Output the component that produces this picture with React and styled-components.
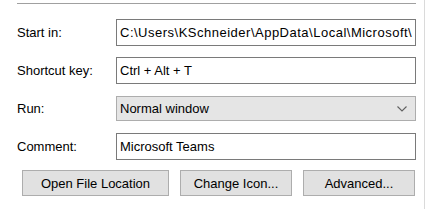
import React from 'react';
import styled, { createGlobalStyle } from 'styled-components';

const GlobalStyle = createGlobalStyle`
  html, body {
    margin: 0;
    padding: 0;
    background: #ffffff;
  }
  body {
    font-family: 'Liberation Sans', Arial, sans-serif;
    font-size: 13px;
    color: #000000;
  }
`;

const fields = [
  { label: 'Start in:', value: 'C:\\Users\\KSchneider\\AppData\\Local\\Microsoft\\', spacing: 0.5 },
  { label: 'Shortcut key:', value: 'Ctrl + Alt + T' },
  { label: 'Run:', value: 'Normal window', select: true },
  { label: 'Comment:', value: 'Microsoft Teams' }
];

const buttons = [
  { text: 'Open File Location', width: 147 },
  { text: 'Change Icon...', width: 112 },
  { text: 'Advanced...', width: 112 }
];

function Chevron() {
  return (
    <svg width="10" height="6" viewBox="0 0 10 6">
      <path d="M0.5 0.5 L5 5 L9.5 0.5" fill="none" stroke="#606060" strokeWidth="1.1" />
    </svg>
  );
}

export default function App() {
  return (
    <>
      <GlobalStyle />
      <Page>
        <Panel>
          <Separator />
          <Form>
            {fields.map((f) => (
              <Row key={f.label}>
                <Label>{f.label}</Label>
                {f.select ? (
                  <Select>
                    <span>{f.value}</span>
                    <Chevron />
                  </Select>
                ) : (
                  <Field $spacing={f.spacing || 0}>{f.value}</Field>
                )}
              </Row>
            ))}
          </Form>
          <ButtonBar>
            {buttons.map((b) => (
              <Button key={b.text} $width={b.width}>
                {b.text}
              </Button>
            ))}
          </ButtonBar>
        </Panel>
      </Page>
    </>
  );
}

const Page = styled.div`
  width: 425px;
  height: 209px;
  border-right: 1px solid #dadada;
  box-sizing: border-box;
  overflow: hidden;
`;

const Panel = styled.div`
  display: flex;
  flex-direction: column;
  padding: 3px 0 0 17px;
  width: 399px;
`;

const Separator = styled.div`
  height: 1px;
  background: #a0a0a0;
  margin-bottom: 15px;
`;

const Form = styled.div`
  display: flex;
  flex-direction: column;
  row-gap: 11px;
`;

const Row = styled.div`
  display: grid;
  grid-template-columns: 99px 300px;
  align-items: center;
  height: 27px;
`;

const Label = styled.div`
  white-space: nowrap;
  margin-top: -1px;
`;

const Field = styled.div`
  box-sizing: border-box;
  height: 27px;
  padding: 0 2px 0 3px;
  line-height: 25px;
  border: 1px solid #7a7a7a;
  background: #ffffff;
  white-space: nowrap;
  overflow: hidden;
  letter-spacing: ${(p) => p.$spacing}px;
`;

const Select = styled.div`
  box-sizing: border-box;
  height: 25px;
  padding: 0 8px 0 3px;
  display: flex;
  align-items: center;
  justify-content: space-between;
  border: 1px solid #adadad;
  background: #e5e5e5;
  white-space: nowrap;
`;

const ButtonBar = styled.div`
  display: flex;
  column-gap: 11px;
  padding-left: 5px;
  margin-top: 10px;
`;

const Button = styled.div`
  box-sizing: border-box;
  width: ${(p) => p.$width}px;
  height: 26px;
  display: flex;
  align-items: center;
  justify-content: center;
  border: 1px solid #adadad;
  background: #e1e1e1;
  white-space: nowrap;
`;
